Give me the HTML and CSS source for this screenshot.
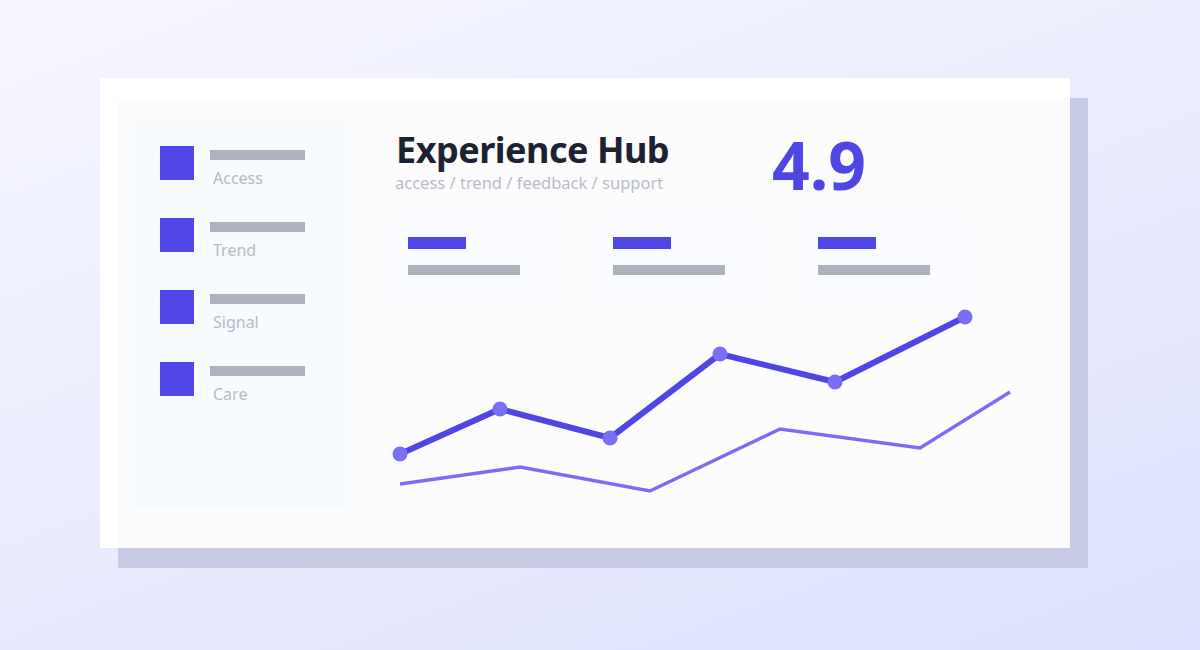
FILE: index.html
```html
<!DOCTYPE html>
<html lang="en">
	<head>
		<meta charset="UTF-8" />
		<meta name="viewport" content="width=device-width, initial-scale=1.0" />
		<title>Experience Hub</title>
		<link rel="stylesheet" href="styles.css">
	</head>
	<body>
		<div class="stage">
			<div class="card">
				<div class="inner">
					<aside class="sidebar">
						<div class="nav-item">
							<span class="nav-icon"></span>
							<div class="nav-text">
								<span class="bar"></span>
								<span class="nav-label">Access</span>
							</div>
						</div>
						<div class="nav-item">
							<span class="nav-icon"></span>
							<div class="nav-text">
								<span class="bar"></span>
								<span class="nav-label">Trend</span>
							</div>
						</div>
						<div class="nav-item">
							<span class="nav-icon"></span>
							<div class="nav-text">
								<span class="bar"></span>
								<span class="nav-label">Signal</span>
							</div>
						</div>
						<div class="nav-item">
							<span class="nav-icon"></span>
							<div class="nav-text">
								<span class="bar"></span>
								<span class="nav-label">Care</span>
							</div>
						</div>
					</aside>
					<main class="main">
						<header class="header">
							<div class="heading">
								<h1>Experience Hub</h1>
								<p class="subtitle">access / trend / feedback / support</p>
							</div>
							<div class="score">4.9</div>
						</header>
						<section class="stats">
							<div class="stat">
								<span class="stat-value"></span>
								<span class="bar stat-bar"></span>
							</div>
							<div class="stat">
								<span class="stat-value"></span>
								<span class="bar stat-bar"></span>
							</div>
							<div class="stat">
								<span class="stat-value"></span>
								<span class="bar stat-bar"></span>
							</div>
						</section>
						<!-- два ряди даних: основний з точками і другорядний -->
						<svg class="chart" width="680" height="242" viewBox="0 0 680 242">
							<polyline class="line-main" points="10,149 110,104 220,133 330,49 445,77 575,12" />
							<polyline class="line-second" points="10,179 130,162 260,186 390,124 530,143 620,87" />
							<g class="dots">
								<circle cx="10" cy="149" r="7.5" />
								<circle cx="110" cy="104" r="7.5" />
								<circle cx="220" cy="133" r="7.5" />
								<circle cx="330" cy="49" r="7.5" />
								<circle cx="445" cy="77" r="7.5" />
								<circle cx="575" cy="12" r="7.5" />
							</g>
						</svg>
					</main>
				</div>
			</div>
		</div>
	</body>
</html>
```

FILE: styles.css
```css
body {
	font-family: "Noto Sans", Arial, sans-serif;
	margin: 0;
	height: 650px;
	overflow: hidden;
	background: linear-gradient(160deg, #f6f7fe 0%, #e9ebfe 50%, #dce0fe 100%); /* світлий лавандовий фон */
}
.stage {
	padding: 78px 0 0 100px;
}
.card {
	width: 970px;
	height: 470px;
	background-color: #fff;
	box-shadow: 18px 20px 0 #c7cbe5; /* плоска тінь */
	display: flex;
}
.inner {
	flex: 1;
	margin: 20px 0 0 18px;
	background-color: #fcfcfc;
	display: flex;
	align-items: flex-start;
}
.sidebar {
	width: 220px;
	height: 388px;
	margin: 22px 0 0 12px;
	padding: 26px 0 0 30px;
	box-sizing: border-box;
	background-color: #f8fbfe;
	display: flex;
	flex-direction: column;
	gap: 30px;
}
.nav-item {
	display: flex;
	gap: 16px;
}
.nav-icon {
	width: 34px;
	height: 34px;
	background-color: #5046e5;
}
.nav-text {
	display: flex;
	flex-direction: column;
	padding-top: 4px;
}
.bar {
	display: block;
	width: 95px;
	height: 10px;
	background-color: #adb1bc;
}
.nav-label {
	font-size: 16px;
	line-height: 20px;
	margin: 8px 0 0 3px;
	color: #b6bac7;
}
.main {
	flex: 1;
	padding: 31px 0 0 40px;
	display: flex;
	flex-direction: column;
}
.header {
	display: flex;
	align-items: flex-start;
}
.heading {
	width: 382px;
	padding-left: 6px;
	box-sizing: border-box;
}
h1 {
	margin: 0;
	font-size: 36px;
	line-height: 42px;
	font-weight: 700;
	letter-spacing: -0.5px;
	color: #1d2233;
}
.subtitle {
	margin: 2px 0 0 -1px;
	font-size: 16.5px;
	line-height: 20px;
	color: #b6bccb;
}
.score {
	margin-top: -5px;
	font-size: 66px;
	line-height: 80px;
	font-weight: 700;
	color: #5046e5;
}
.stats {
	display: flex;
	gap: 35px;
	margin-top: 10px;
}
.stat {
	width: 170px;
	height: 91px;
	padding: 23px 0 0 18px;
	box-sizing: border-box;
	background-color: #f9fbfe;
	display: flex;
	flex-direction: column;
	gap: 16px;
}
.stat-value {
	display: block;
	width: 58px;
	height: 12px;
	background-color: #5046e5;
}
.stat-bar {
	width: 112px;
}
.chart {
	display: block;
}
.line-main {
	fill: none;
	stroke: #5046e5;
	stroke-width: 6;
}
.line-second {
	fill: none;
	stroke: #7b6cf6;
	stroke-width: 3.5;
}
.dots circle {
	fill: #7b6ef6;
}
```
